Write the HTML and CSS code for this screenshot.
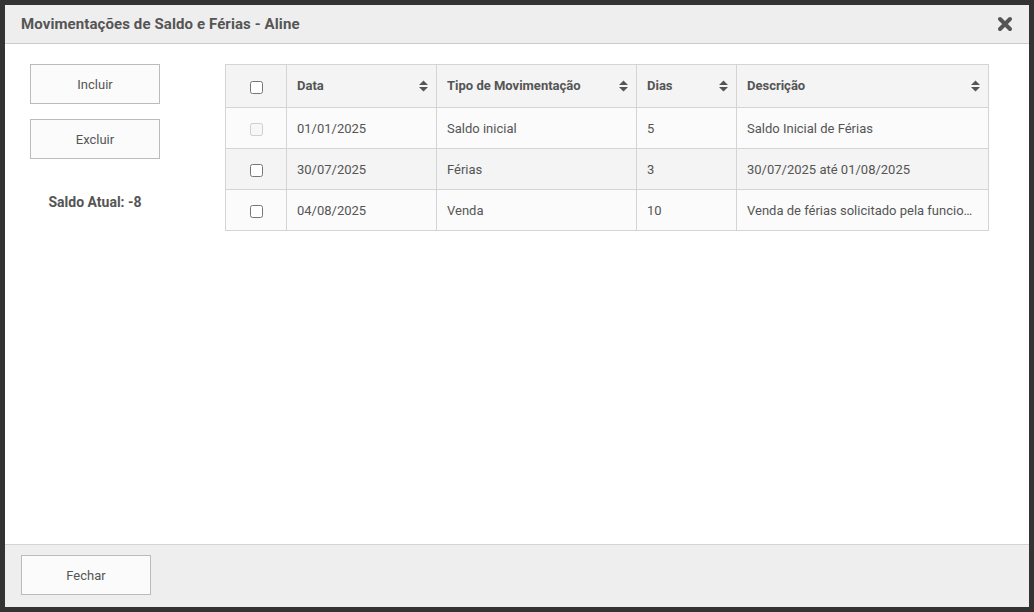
FILE: index.html
```html
<!DOCTYPE html>
<html lang="pt-BR">
<head>
<meta charset="utf-8">
<title>Movimentações de Saldo e Férias</title>
<link rel="stylesheet" href="styles.css">
</head>
<body>
<div class="dialog">
  <div class="dialog-header">
    <span class="dialog-title">Movimentações de Saldo e Férias - Aline</span>
    <button class="close-btn" aria-label="Fechar">
      <svg width="16" height="16" viewBox="0 0 16 16"><path d="M3 3 L13 13 M13 3 L3 13" stroke="#555" stroke-width="4" stroke-linecap="round"/></svg>
    </button>
  </div>
  <div class="dialog-body">
    <div class="side">
      <button class="btn">Incluir</button>
      <button class="btn">Excluir</button>
      <div class="saldo">Saldo Atual: -8</div>
    </div>
    <table class="grid">
      <colgroup>
        <col class="c-check"><col class="c-data"><col class="c-tipo"><col class="c-dias"><col class="c-desc">
      </colgroup>
      <thead>
        <tr>
          <th class="check"><input type="checkbox"></th>
          <th><div class="th-in"><span>Data</span><svg class="sort" width="9" height="12" viewBox="0 0 9 12"><path d="M0 5 L4.5 0.5 L9 5 Z M0 7 L9 7 L4.5 11.5 Z" fill="#555"/></svg></div></th>
          <th><div class="th-in"><span>Tipo de Movimentação</span><svg class="sort" width="9" height="12" viewBox="0 0 9 12"><path d="M0 5 L4.5 0.5 L9 5 Z M0 7 L9 7 L4.5 11.5 Z" fill="#555"/></svg></div></th>
          <th><div class="th-in"><span>Dias</span><svg class="sort" width="9" height="12" viewBox="0 0 9 12"><path d="M0 5 L4.5 0.5 L9 5 Z M0 7 L9 7 L4.5 11.5 Z" fill="#555"/></svg></div></th>
          <th><div class="th-in"><span>Descrição</span><svg class="sort" width="9" height="12" viewBox="0 0 9 12"><path d="M0 5 L4.5 0.5 L9 5 Z M0 7 L9 7 L4.5 11.5 Z" fill="#555"/></svg></div></th>
        </tr>
      </thead>
      <tbody>
        <tr>
          <td class="check"><input type="checkbox" disabled></td>
          <td>01/01/2025</td>
          <td>Saldo inicial</td>
          <td>5</td>
          <td class="desc">Saldo Inicial de Férias</td>
        </tr>
        <tr>
          <td class="check"><input type="checkbox"></td>
          <td>30/07/2025</td>
          <td>Férias</td>
          <td>3</td>
          <td class="desc">30/07/2025 até 01/08/2025</td>
        </tr>
        <tr>
          <td class="check"><input type="checkbox"></td>
          <td>04/08/2025</td>
          <td>Venda</td>
          <td>10</td>
          <td class="desc">Venda de férias solicitado pela funcionária</td>
        </tr>
      </tbody>
    </table>
  </div>
  <div class="dialog-footer">
    <button class="btn">Fechar</button>
  </div>
</div>
</body>
</html>
```
FILE: styles.css
```css
html, body {
  margin: 0;
  padding: 0;
  background: #333333;
  width: 1034px;
  height: 612px;
  overflow: hidden;
}
body {
  padding: 5px;
  box-sizing: border-box;
  font-family: Roboto, "Liberation Sans", sans-serif;
  font-size: 13px;
  color: #555555;
}
.dialog {
  width: 1024px;
  height: 602px;
  background: #ffffff;
  display: flex;
  flex-direction: column;
}
.dialog-header {
  height: 38px;
  background: #eeeeee;
  border-bottom: 1px solid #cccccc;
  display: flex;
  align-items: center;
  justify-content: space-between;
  padding: 0 16px 0 16px;
  flex-shrink: 0;
}
.dialog-title {
  font-size: 15px;
  letter-spacing: 0.1px;
  font-weight: bold;
  color: #555555;
}
.close-btn {
  border: 0;
  background: transparent;
  padding: 0;
  width: 16px;
  height: 16px;
  display: flex;
  cursor: pointer;
}
.dialog-body {
  flex: 1;
  display: flex;
  align-items: flex-start;
  gap: 65px;
  padding: 20px 25px;
}
.side {
  width: 130px;
  display: flex;
  flex-direction: column;
  gap: 15px;
}
.btn {
  width: 130px;
  height: 40px;
  background: #fbfbfb;
  border: 1px solid #bbbbbb;
  color: #555555;
  font-family: Roboto, "Liberation Sans", sans-serif;
  font-size: 13px;
  padding: 0;
  cursor: pointer;
}
.saldo {
  margin-top: 20px;
  text-align: center;
  font-weight: bold;
  font-size: 14px;
  color: #555555;
}
.grid {
  width: 763px;
  border-collapse: collapse;
  table-layout: fixed;
}
.c-check { width: 61px; }
.c-data { width: 150px; }
.c-tipo { width: 200px; }
.c-dias { width: 100px; }
.c-desc { width: 252px; }
.grid th, .grid td {
  border: 1px solid #d4d4d4;
  padding: 0 10px;
  text-align: left;
  white-space: nowrap;
  overflow: hidden;
  text-overflow: ellipsis;
}
.grid th {
  height: 41px;
  padding-bottom: 1px;
  background: #f4f4f4;
  font-weight: bold;
}
.grid td {
  height: 40px;
}
.grid tbody tr:nth-child(odd) td { background: #fbfbfb; }
.grid tbody tr:nth-child(even) td { background: #f4f4f4; }
.grid .check {
  text-align: center;
  padding: 0;
}
.grid input[type="checkbox"] {
  margin: 0;
  width: 13px;
  height: 13px;
  vertical-align: middle;
}
.th-in {
  display: flex;
  align-items: center;
  justify-content: space-between;
  margin-right: -2px;
}
.sort { flex-shrink: 0; }
.dialog-footer {
  flex-shrink: 0;
  height: 63px;
  box-sizing: border-box;
  background: #eeeeee;
  border-top: 1px solid #d4d4d4;
  padding: 10px 16px;
}
```
